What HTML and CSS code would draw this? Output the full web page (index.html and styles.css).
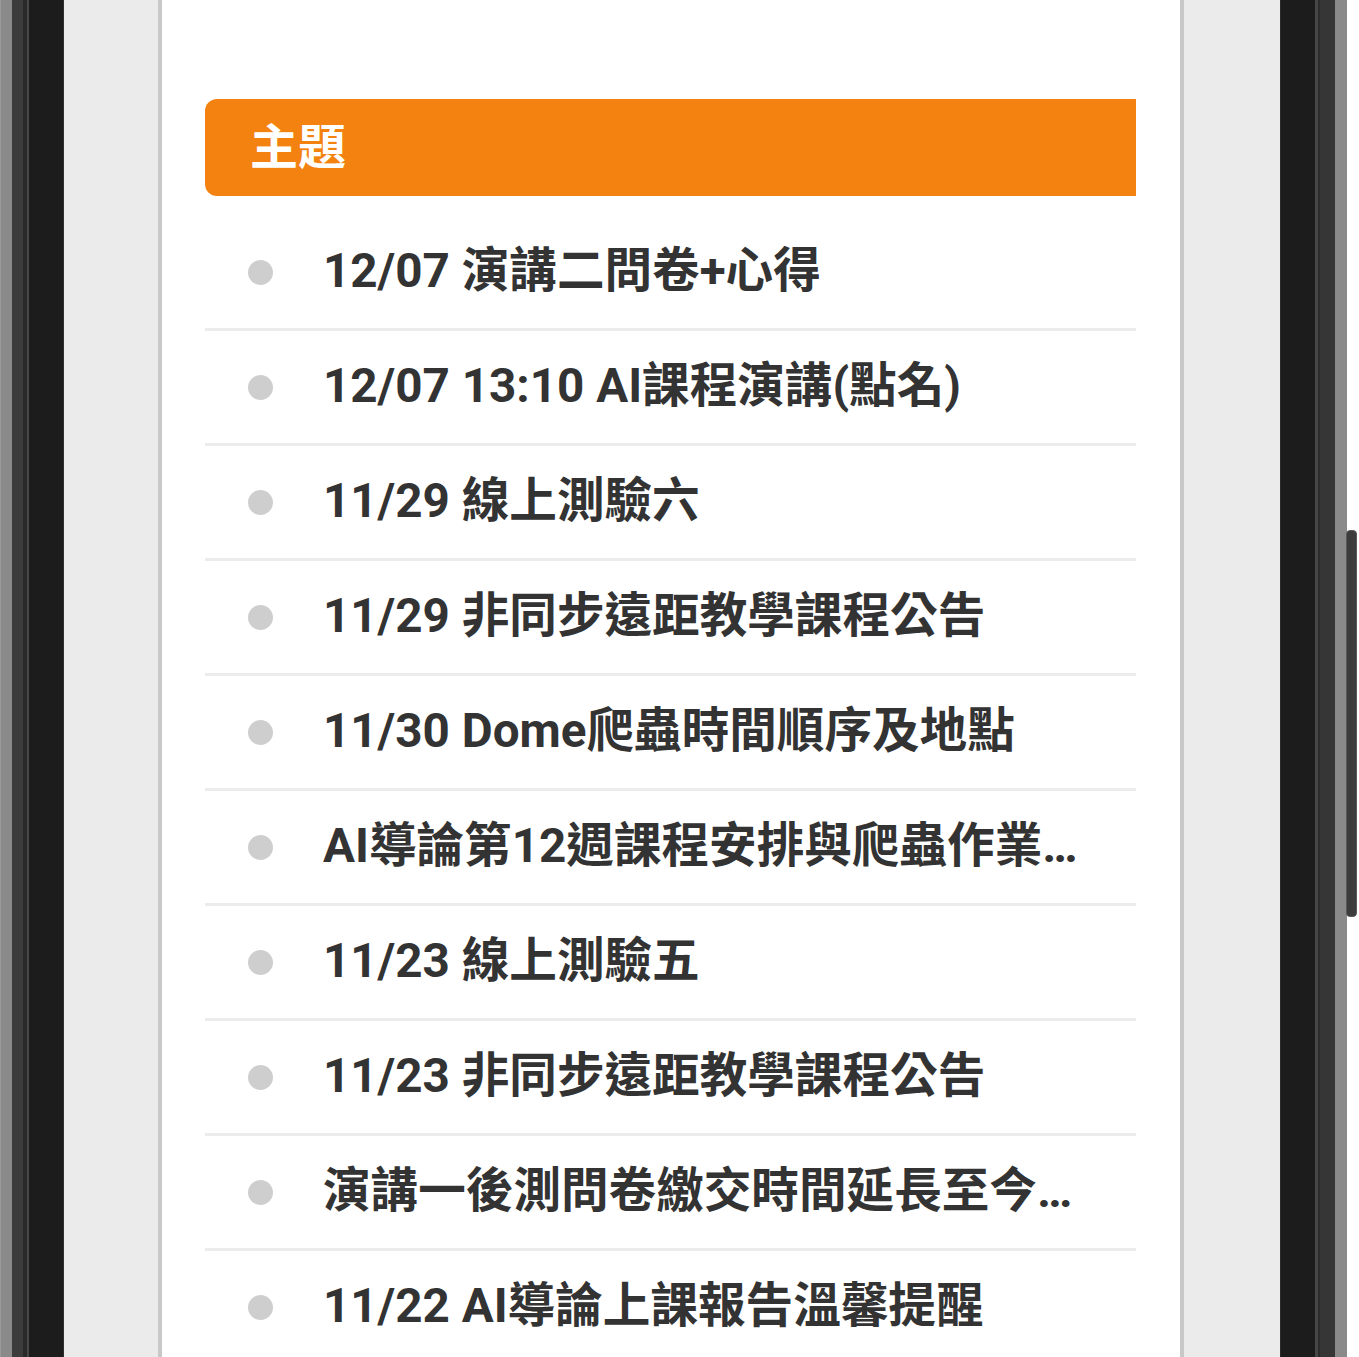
FILE: index.html
```html
<!DOCTYPE html>
<html lang="zh-Hant">
<head>
<meta charset="utf-8">
<title>主題</title>
<link rel="stylesheet" href="styles.css">
</head>
<body>
<div class="device">
  <div class="bezel bezel-left"></div>
  <div class="screen">
    <div class="card">
      <div class="section-title">主題</div>
      <ul class="topics">
        <li class="topic"><span class="dot"></span><span class="topic-text">12/07 演講二問卷+心得</span></li>
        <li class="topic"><span class="dot"></span><span class="topic-text">12/07 13:10 AI課程演講(點名)</span></li>
        <li class="topic"><span class="dot"></span><span class="topic-text">11/29 線上測驗六</span></li>
        <li class="topic"><span class="dot"></span><span class="topic-text">11/29 非同步遠距教學課程公告</span></li>
        <li class="topic"><span class="dot"></span><span class="topic-text">11/30 Dome爬蟲時間順序及地點</span></li>
        <li class="topic"><span class="dot"></span><span class="topic-text">AI導論第12週課程安排與爬蟲作業說明</span></li>
        <li class="topic"><span class="dot"></span><span class="topic-text">11/23 線上測驗五</span></li>
        <li class="topic"><span class="dot"></span><span class="topic-text">11/23 非同步遠距教學課程公告</span></li>
        <li class="topic"><span class="dot"></span><span class="topic-text">演講一後測問卷繳交時間延長至今日晚上</span></li>
        <li class="topic"><span class="dot"></span><span class="topic-text">11/22 AI導論上課報告溫馨提醒</span></li>
      </ul>
    </div>
  </div>
  <div class="bezel bezel-right"><span class="side-btn"></span></div>
</div>
</body>
</html>
```
FILE: styles.css
```css
html, body {
  margin: 0;
  padding: 0;
  background: #ffffff;
  overflow: hidden;
}

.device {
  display: flex;
  width: 1347px;
  height: 100vh;
  font-family: Roboto, "Noto Sans CJK TC", sans-serif;
}

.bezel {
  flex: none;
  height: 100%;
}

.bezel-left {
  width: 64px;
  background: linear-gradient(to right,
    #9a9a9a 0 1px,
    #8a8a8a 1px 12px,
    #3c3c3c 12px 23px,
    #2a2a2a 23px 27px,
    #474747 27px 29px,
    #1c1c1c 29px 63px,
    #2f2f2f 63px 64px);
}

.bezel-right {
  position: relative;
  width: 67px;
  background: linear-gradient(to right,
    #2a2a2a 0 1px,
    #1c1c1c 1px 35px,
    #464646 35px 38px,
    #2c2c2c 38px 40px,
    #363636 40px 55px,
    #8a8a8a 55px 67px);
}

.side-btn {
  position: absolute;
  left: 66px;
  top: 530px;
  width: 11px;
  height: 387px;
  box-sizing: border-box;
  background: #3c3c3c;
  border: 1px solid #5a5a5a;
  border-radius: 4px;
}

.screen {
  flex: 1;
  min-width: 0;
  height: 100%;
  overflow: hidden;
  background: #ebebeb;
  padding: 0 96px 0 94px;
  display: flex;
}

.card {
  flex: 1;
  min-width: 0;
  background: #ffffff;
  border-left: 4px solid #c8c8c8;
  border-right: 4px solid #c8c8c8;
  padding: 99px 44px 0 43px;
}

.section-title {
  height: 97px;
  display: flex;
  align-items: center;
  padding-left: 45px;
  background: #f38211;
  border-radius: 12px 0 0 12px;
  color: #ffffff;
  font-size: 48px;
  font-weight: 700;
  line-height: 1.2;
}

.topics {
  list-style: none;
  margin: 20px 0 0;
  padding: 0;
}

.topic {
  height: 112px;
  display: flex;
  align-items: center;
  padding: 0 45px 0 43px;
  border-bottom: 3px solid #ececec;
}

.dot {
  flex: none;
  width: 25px;
  height: 25px;
  border-radius: 50%;
  background: #cecece;
  margin-right: 50px;
}

.topic-text {
  flex: 1;
  min-width: 0;
  white-space: nowrap;
  overflow: hidden;
  text-overflow: ellipsis;
  color: #333333;
  font-size: 47.6px;
  font-weight: 700;
  line-height: 1.2;
}
```
